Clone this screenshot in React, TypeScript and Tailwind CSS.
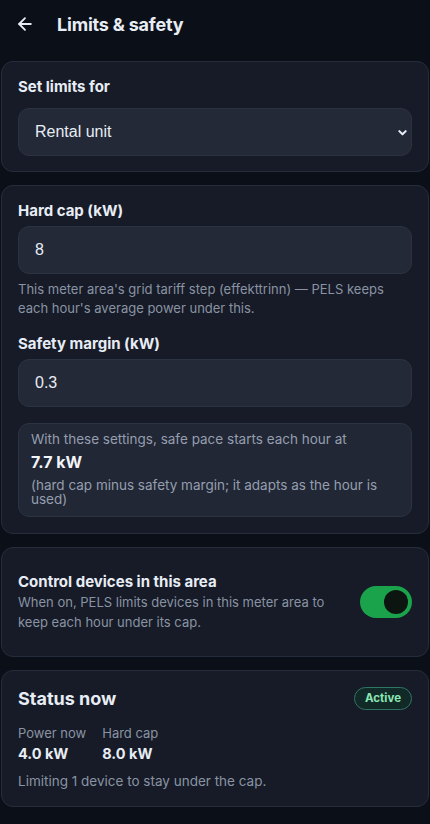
import React, { useState } from "react";

const font = { fontFamily: "Inter, 'Noto Sans', sans-serif" };
const inputFont = { fontFamily: "'Liberation Sans', Arial, sans-serif" };

function Card({ children, className = "" }: { children: React.ReactNode; className?: string }) {
  return (
    <div className={"rounded-[12px] border border-[#262d3a] bg-[#161b27] px-[16px] " + className}>
      {children}
    </div>
  );
}

export default function App() {
  const [on, setOn] = useState(true);
  return (
    <div className="flex min-h-[824px] w-[430px] flex-col gap-[13px] bg-[#0b0f18] text-[#e8edf5]" style={font}>
      <div className="flex h-[48px] items-center pl-[15px]">
        <svg width="20" height="20" viewBox="0 0 24 24" fill="none" stroke="#e8edf5" strokeWidth="2.2" strokeLinecap="round" strokeLinejoin="round">
          <path d="M19 12H5" />
          <path d="M12 19l-7-7 7-7" />
        </svg>
        <h1 className="ml-[22px] text-[18px] font-bold tracking-[-0.2px]">Limits &amp; safety</h1>
      </div>

      <div className="flex flex-col gap-[13px] px-[1px]">
        <Card className="pt-[15px] pb-[15px]">
          <div className="text-[15px] font-bold leading-[20px]">Set limits for</div>
          <div className="relative mt-[11px] flex h-[48px] items-center rounded-[11px] border border-[#2b3241] bg-[#232936] pl-[16px]">
            <span className="text-[16px] text-[#e8edf5]" style={inputFont}>Rental unit</span>
            <svg className="absolute right-[3px] top-[18px]" width="11" height="11" viewBox="0 0 24 24" fill="none" stroke="#e8edf5" strokeWidth="4.5" strokeLinecap="round" strokeLinejoin="round">
              <path d="M5 9l7 7 7-7" />
            </svg>
          </div>
        </Card>

        <Card className="pt-[15px] pb-[16px]">
          <div className="text-[15px] font-bold leading-[20px]">Hard cap (kW)</div>
          <div className="mt-[5px] flex h-[48px] items-center rounded-[11px] border border-[#2b3241] bg-[#232936] pl-[16px]">
            <span className="text-[16px]" style={inputFont}>8</span>
          </div>
          <p className="mt-[6px] text-[13px] leading-[19px] text-[#8a93a3]">
            This meter area's grid tariff step (effekttrinn) — PELS keeps each hour's average power under this.
          </p>
          <div className="mt-[16px] text-[15px] font-bold leading-[20px]">Safety margin (kW)</div>
          <div className="mt-[5px] flex h-[48px] items-center rounded-[11px] border border-[#2b3241] bg-[#232936] pl-[16px]">
            <span className="text-[16px]" style={inputFont}>0.3</span>
          </div>
          <div className="mt-[16px] rounded-[11px] border border-[#2b3241] bg-[#212735] px-[12px] pt-[6px] pb-[10px]">
            <div className="text-[13.5px] leading-[18px] text-[#959eae]">With these settings, safe pace starts each hour at</div>
            <div className="mt-[3px] text-[16px] font-bold leading-[22px] text-[#f1f4f9]">7.7 kW</div>
            <div className="mt-[5px] text-[13.5px] leading-[14px] text-[#959eae]">(hard cap minus safety margin; it adapts as the hour is used)</div>
          </div>
        </Card>

        <Card className="pt-[24px] pb-[24px]">
          <div className="flex items-center justify-between">
            <div className="w-[322px]">
              <div className="text-[15px] font-bold leading-[20px]">Control devices in this area</div>
              <div className="text-[13px] leading-[20px] text-[#8a93a3]">
                When on, PELS limits devices in this meter area to keep each hour under its cap.
              </div>
            </div>
            <button
              onClick={() => setOn(!on)}
              className="relative h-[32px] w-[52px] shrink-0 rounded-full bg-[#1aa34a]"
            >
              <span className="absolute right-[4px] top-[4px] h-[24px] w-[24px] rounded-full bg-[#0d1511]" />
            </button>
          </div>
        </Card>

        <Card className="pt-[16px] pb-[16px]">
          <div className="flex items-start justify-between">
            <div className="text-[18px] font-bold leading-[24px]">Status now</div>
            <span className="flex h-[23px] items-center rounded-full border border-[#2f7564] bg-[#122a27] px-[10px] text-[11.5px] font-bold text-[#8ae6b5]">
              Active
            </span>
          </div>
          <div className="mt-[13px] flex gap-[16px]">
            <div>
              <div className="text-[13px] leading-[18px] text-[#8a93a3]">Power now</div>
              <div className="mt-[2px] text-[14.5px] font-bold leading-[20px]">4.0 kW</div>
            </div>
            <div>
              <div className="text-[13px] leading-[18px] text-[#8a93a3]">Hard cap</div>
              <div className="mt-[2px] text-[14.5px] font-bold leading-[20px]">8.0 kW</div>
            </div>
          </div>
          <div className="mt-[8px] text-[13.5px] leading-[18px] text-[#8a93a3]">Limiting 1 device to stay under the cap.</div>
        </Card>
      </div>
    </div>
  );
}
